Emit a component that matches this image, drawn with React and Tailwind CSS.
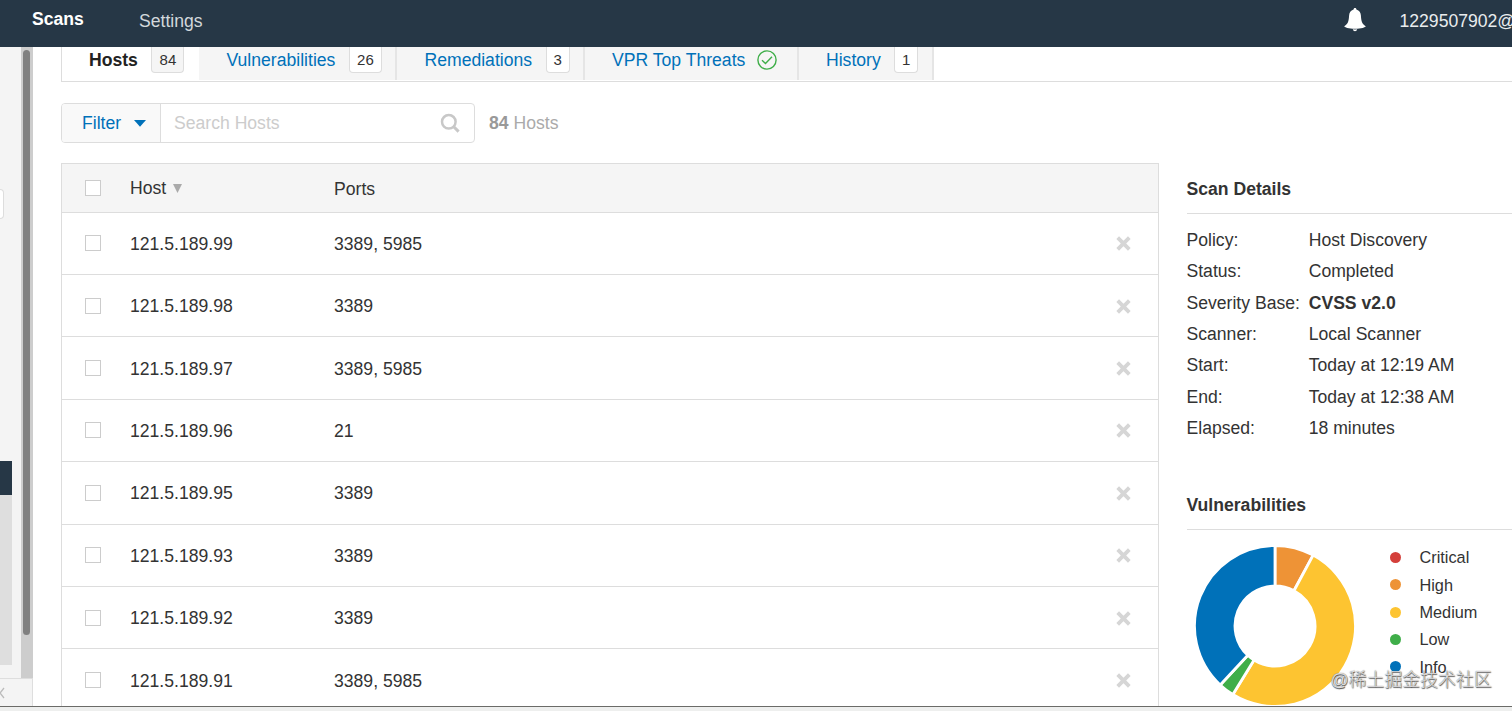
const tabs = [
  { label: "Hosts", count: 84, active: true, width: "w-[137px]" },
  { label: "Vulnerabilities", count: 26, width: "w-[198px]" },
  { label: "Remediations", count: 3, width: "w-[187.5px]" },
  { label: "VPR Top Threats", check: true, width: "w-[214px]" },
  { label: "History", count: 1, width: "w-[135.5px]" },
];

const hosts = [
  { ip: "121.5.189.99", ports: "3389, 5985" },
  { ip: "121.5.189.98", ports: "3389" },
  { ip: "121.5.189.97", ports: "3389, 5985" },
  { ip: "121.5.189.96", ports: "21" },
  { ip: "121.5.189.95", ports: "3389" },
  { ip: "121.5.189.93", ports: "3389" },
  { ip: "121.5.189.92", ports: "3389" },
  { ip: "121.5.189.91", ports: "3389, 5985" },
];

const details = [
  ["Policy:", "Host Discovery"],
  ["Status:", "Completed"],
  ["Severity Base:", "CVSS v2.0"],
  ["Scanner:", "Local Scanner"],
  ["Start:", "Today at 12:19 AM"],
  ["End:", "Today at 12:38 AM"],
  ["Elapsed:", "18 minutes"],
];

const legend = [
  { label: "Critical", color: "bg-[#d43f3a]" },
  { label: "High", color: "bg-[#ee9336]" },
  { label: "Medium", color: "bg-[#fdc431]" },
  { label: "Low", color: "bg-[#3fae49]" },
  { label: "Info", color: "bg-[#0071b9]" },
];

const slices = [
  { from: 0, to: 28.3, color: "#ee9336" },
  { from: 28.3, to: 211.6, color: "#fdc431" },
  { from: 211.6, to: 222.9, color: "#3fae49" },
  { from: 222.9, to: 360, color: "#0071b9" },
];

function App() {
  return (
    <div className="flex h-[711px] w-[1512px] flex-col overflow-hidden bg-white font-['Liberation_Sans',sans-serif] text-[17.6px] leading-5 text-[#333]">
      <Header />

      <div className="flex h-[659px] overflow-hidden">
        <Sidebar />

        <main className="min-w-0 flex-1 pl-7">
          <Tabs />
          <SearchBar />

          <div className="flex">
            <HostTable />
            <ScanDetails />
          </div>
        </main>
      </div>

      <div className="h-[5px] border-t border-[#6b6b68] bg-[#eeefee]" />
    </div>
  );
}

function Header() {
  return (
    <header className="flex h-[47px] shrink-0 items-start bg-[#263746] whitespace-nowrap">
      <span className="w-[107px] pl-8 pt-[9px] font-bold text-white">Scans</span>
      <span className="pl-8 pt-[11px] text-[#d3d8dc]">Settings</span>
      <Bell />
      <span className="w-[112.5px] overflow-hidden pt-[11px] text-[#e9ecee]">1229507902@</span>
    </header>
  );
}

function Bell() {
  return (
    <svg className="mt-2 mr-[34px] ml-auto h-6 w-[22px]" viewBox="0 0 22 24" fill="#fff">
      <path d="M11 0C10 0 9.6.6 9.6 1.6C6.6 2.4 5.3 4.8 5.1 7.5C4.8 12.6 4.2 16 .3 18.2C.3 19.2 4.8 20.7 11 20.7C17.2 20.7 21.7 19.2 21.7 18.2C17.8 16 17.2 12.6 16.9 7.5C16.7 4.8 15.4 2.4 12.4 1.6C12.4.6 12 0 11 0Z" />
      <path d="M8.8 21.3Q11 21.6 13.2 21.3Q12.8 23.2 11 23.2Q9.2 23.2 8.8 21.3Z" />
    </svg>
  );
}

function Sidebar() {
  return (
    <aside className="flex w-[33px] shrink-0 flex-col bg-[#f4f4f4]">
      <div className="flex h-[631px]">
        <div className="w-[21px]">
          <div className="mt-[142px] h-[30px] w-1 rounded-r-[5px] border border-l-0 border-[#ddd] bg-white" />
          <div className="mt-[242px] h-[34px] w-3 bg-[#263746]" />
          <div className="h-[170px] w-3 bg-[#dedede]" />
        </div>
        <div className="w-3 bg-[#cdcdcd] pt-[3px] pl-0.5">
          <div className="h-[585px] w-[6.5px] rounded-full bg-[#808080]" />
        </div>
      </div>
      <div className="flex flex-1 items-center border-t border-r border-[#dedede]">
        <svg className="h-3 w-1.5" viewBox="0 0 6 12" fill="none" stroke="#bbb" strokeWidth="1.3">
          <path d="M4 1L0 6L4 11" />
        </svg>
      </div>
    </aside>
  );
}

function Tabs() {
  return (
    <nav className="flex h-[35px] border-b border-l border-[#ddd] whitespace-nowrap">
      {tabs.map((tab) => (
        <div
          key={tab.label}
          className={`flex h-[33px] shrink-0 items-start ${tab.width} ${
            tab.active ? "bg-white pl-[27px]" : "border-r-2 border-[#e5e5e5] bg-[#f5f5f5] pl-[27.5px]"
          }`}
        >
          <span className={tab.active ? "pt-[3px] font-bold text-[#222]" : "pt-[3px] text-[#0071b9]"}>
            {tab.label}
          </span>

          {tab.check ? (
            <svg className="mt-[3px] ml-3 h-5 w-5" viewBox="0 0 20 20" fill="none" stroke="#3fae49" strokeWidth="1.4">
              <circle cx="10" cy="10" r="9.1" />
              <path d="M5 10.2L8.5 13.5L15 6.8" />
            </svg>
          ) : (
            <span
              className={`ml-[13.5px] flex h-[26px] items-center justify-center rounded-b border border-t-0 border-[#ddd] text-[15px] ${
                tab.count > 9 ? "w-[33px]" : "w-6"
              } ${tab.active ? "bg-[#f5f5f5]" : "bg-white"}`}
            >
              {tab.count}
            </span>
          )}
        </div>
      ))}
    </nav>
  );
}

function SearchBar() {
  return (
    <div className="mt-[21px] flex items-center">
      <div className="flex h-10 w-[414px] overflow-hidden rounded border border-[#ddd]">
        <div className="flex w-[98.5px] items-center border-r border-[#ddd] bg-[#f9f9f9] pl-5 text-[#0071b9]">
          Filter
          <svg className="ml-[13px] h-[7px] w-3" viewBox="0 0 12 7" fill="#0071b9">
            <path d="M0 0H12L6 6.8Z" />
          </svg>
        </div>
        <div className="flex flex-1 items-center justify-between pr-[14px] pl-[13.5px] text-[#ccc]">
          Search Hosts
          <svg className="h-5 w-5" viewBox="0 0 20 20" fill="none" stroke="#c8c8c8" strokeWidth="2.5">
            <circle cx="8.8" cy="8.8" r="6.8" />
            <path d="M13.5 13.5L18.6 18.6" strokeWidth="3" />
          </svg>
        </div>
      </div>
      <span className="ml-[14px] text-[#aaa]">
        <b className="text-[#999]">84</b> Hosts
      </span>
    </div>
  );
}

function Checkbox() {
  return <span className="ml-[23px] h-4 w-4 border border-[#ccc] bg-white" />;
}

function HostTable() {
  return (
    <section className="mt-5 w-[1098px] shrink-0 border border-b-0 border-[#ddd]">
      <div className="flex h-[48.6px] items-center border-b border-[#ddd] bg-[#f5f5f5]">
        <Checkbox />
        <span className="ml-[29px] flex w-[204px] items-center">
          Host
          <svg className="mt-0.5 ml-[7px] h-[9px] w-[9px]" viewBox="0 0 9 9" fill="#aaa">
            <path d="M0 0H9L4.5 9Z" />
          </svg>
        </span>
        <span className="pt-0.5">Ports</span>
      </div>

      {hosts.map((host) => (
        <div key={host.ip} className="flex h-[62.4px] items-center border-b border-[#ddd]">
          <Checkbox />
          <span className="ml-[29px] w-[204px] pt-px">{host.ip}</span>
          <span className="pt-px">{host.ports}</span>
          <svg
            className="mt-px mr-[27px] ml-auto h-[15px] w-[15px]"
            viewBox="0 0 15 15"
            stroke="#d6d6d6"
            strokeWidth="3.8"
          >
            <path d="M1.7 1.7L13.3 13.3M13.3 1.7L1.7 13.3" />
          </svg>
        </div>
      ))}
    </section>
  );
}

function ScanDetails() {
  return (
    <section className="ml-[27.5px] min-w-0 flex-1">
      <h3 className="mt-9 border-b border-[#ddd] pb-[14px] font-bold">Scan Details</h3>
      <dl className="mt-[10.5px]">
        {details.map(([name, value]) => (
          <div key={name} className="flex h-[31.3px] items-center whitespace-nowrap">
            <dt className="w-[122.2px]">{name}</dt>
            <dd className={name === "Severity Base:" ? "font-bold" : ""}>{value}</dd>
          </div>
        ))}
      </dl>

      <h3 className="mt-[51px] border-b border-[#ddd] pb-[14px] font-bold">Vulnerabilities</h3>
      <div className="relative flex pt-4">
        <Donut />
        <ul className="ml-[35.5px] -mt-0.5 text-[16.3px]">
          {legend.map((item) => (
            <li key={item.label} className="flex h-[27.4px] items-center">
              <span className={`mr-[18.5px] h-[11px] w-[11px] rounded-full ${item.color}`} />
              {item.label}
            </li>
          ))}
        </ul>
        <span className="absolute top-[138px] left-[144px] font-['Liberation_Sans','Noto_Sans_CJK_SC',sans-serif] text-[17.9px] leading-6 font-light whitespace-nowrap text-white/80 [text-shadow:0_0_1px_#444,0.5px_0.5px_1px_#444]">
          @稀土掘金技术社区
        </span>
      </div>
    </section>
  );
}

function Donut() {
  const point = (angle, r) => {
    const a = (angle * Math.PI) / 180;
    return `${80 + r * Math.sin(a)} ${80 - r * Math.cos(a)}`;
  };

  return (
    <svg className="ml-2 h-40 w-40 shrink-0" viewBox="0 0 160 160" stroke="#fff" strokeWidth="2.8">
      {slices.map(({ from, to, color }) => {
        const large = to - from > 180 ? 1 : 0;
        return (
          <path
            key={from}
            fill={color}
            d={`M${point(from, 80.5)}A80.5 80.5 0 ${large} 1 ${point(to, 80.5)}L${point(to, 40)}A40 40 0 ${large} 0 ${point(from, 40)}Z`}
          />
        );
      })}
    </svg>
  );
}

export default App;
